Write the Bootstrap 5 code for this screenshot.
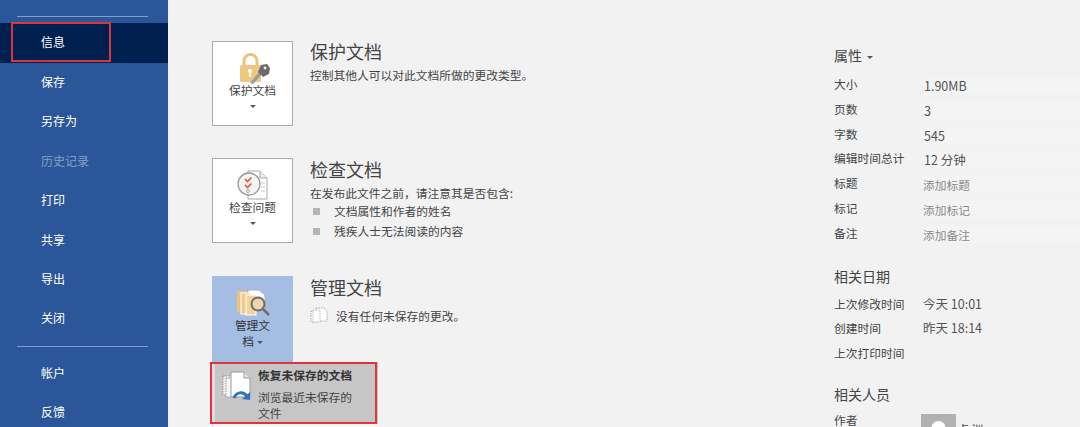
<!DOCTYPE html>
<html lang="zh">
<head>
  <meta charset="utf-8" />
  <title>信息</title>
  <link href="https://cdn.jsdelivr.net/npm/bootstrap@5.3.2/dist/css/bootstrap.min.css" rel="stylesheet">
  <style>
    html, body { height: 427px; overflow: hidden; }
    body {
      background: #f2f2f2;
      color: #444;
      font-family: "Noto Sans CJK SC", "Liberation Sans", sans-serif;
      font-size: 11.75px;
      line-height: 16px;
    }
    .frame { position: relative; width: 1080px; height: 427px; overflow: hidden; }
    /* left menu */
    .side { width: 168px; background: #2b579a; padding-top: 16px; }
    .side-line { height: 1px; margin: 0 20px 0 17px; background: #7f9fcb; }
    .side-item { display: block; height: 39.4px; line-height: 38px; padding-left: 41px; color: #fff; text-decoration: none; font-size: 12px; }
    .side-item.on { background: #002050; height: 40px; }
    .side-item.off { color: #8a9fc0; }
    .side-top { height: 6px; }
    .side-gap { height: 7px; }
    /* middle */
    .mid { width: 666px; padding: 41px 0 0 44px; }
    .sect { height: 117px; }
    .sect-wide { height: 118px; }
    .tile { width: 81px; height: 85px; flex: none; background: #fff; border: 1px solid #ababab; color: #444; text-align: center; padding-top: 10px; }
    .tile svg { display: block; margin: 0 auto; }
    .tile-label { margin-top: -2px; line-height: 16px; }
    .tile-caret { line-height: 14px; }
    .caret-s { display: inline-block; width: 0; height: 0; border-left: 3px solid transparent; border-right: 3px solid transparent; border-top: 3px solid #555; vertical-align: middle; }
    .tile.picked { background: #a4bee3; border-color: #a4bee3; height: 86px; color: #333; padding-top: 12px; }
    .tile.picked .tile-label { margin-top: 1px; line-height: 15.5px; }
    .sect-body { padding-left: 17px; margin-top: -2px; }
    .sect-body.low { margin-top: -1px; }
    .sect-title { font-size: 18px; line-height: 24px; font-weight: 400; color: #444; margin: 0 0 4px; }
    .sect-bullets { margin: 0; padding: 0; list-style: none; }
    .sect-bullets li { display: flex; align-items: center; height: 20px; }
    .sect-bullets i { width: 7px; height: 7px; background: #b5b5b5; margin: 0 14px 0 3px; }
    .sect-note { margin-top: 8px; }
    .drop { position: absolute; left: 212px; top: 362px; width: 166px; height: 65px; background: #c6c6c6; border-left: 3px solid #dcdcdc; border-bottom: 3px solid #f7f7f7; padding: 5px 0 0 7px; color: #444; }
    .drop-icon { margin-top: 4px; }
    .drop-text { margin-left: 6px; }
    .drop-head { font-weight: 700; color: #333; line-height: 16px; }
    .drop-sub { width: 100px; line-height: 15.5px; margin-top: 6px; }
    /* right */
    .info { flex: 1; padding-top: 45px; }
    .info-title { font-size: 14px; line-height: 20px; font-weight: 400; color: #444; margin: 0 0 9px; }
    .info-title .caret-s { margin-left: 2px; }
    .info-row { display: flex; height: 24.8px; line-height: 20px; }
    .info-key { width: 90px; flex: none; }
    .info-val { flex: 1; background: #f4f4f4; height: 17px; line-height: 18px; margin-top: 3px; color: #555; font-size: 12.5px; }
    .info-val.hint { color: #8a8a8a; font-size: 11.75px; margin-left: -1px; }
    .info-val.bare { background: none; margin-left: -1px; color: #555; margin-top: 0; line-height: 20px; }
    .head-date { margin-top: 18px; margin-bottom: 8px; }
    .head-people { margin-top: 16px; margin-bottom: 6px; }
    .avatar { width: 35px; height: 35px; background: #b1b1b1; overflow: hidden; margin-left: -3px; flex: none; margin-top: 4px; }
    .person { margin: 9px 0 0 1px; }
    /* red marks */
    .mark-red { position: absolute; border: 2px solid #e0343c; pointer-events: none; }
    .mark-a { left: 11px; top: 22px; width: 100px; height: 40px; }
    .mark-b { left: 210px; top: 362px; width: 167px; height: 62px; }
  </style>
</head>
<body>
  <div class="frame d-flex">
    <nav class="side flex-shrink-0">
      <div class="side-line"></div>
      <div class="side-top"></div>
      <a class="side-item on" href="#">信息</a>
      <a class="side-item" href="#">保存</a>
      <a class="side-item" href="#">另存为</a>
      <a class="side-item off" href="#">历史记录</a>
      <a class="side-item" href="#">打印</a>
      <a class="side-item" href="#">共享</a>
      <a class="side-item" href="#">导出</a>
      <a class="side-item" href="#">关闭</a>
      <div class="side-gap"></div>
      <div class="side-line"></div>
      <div class="side-gap"></div>
      <a class="side-item" href="#">帐户</a>
      <a class="side-item" href="#">反馈</a>
    </nav>

    <main class="mid">
      <section class="sect d-flex">
        <div class="tile">
          <svg width="38" height="32" viewBox="0 0 38 32">
            <path d="M10 13V9a6.500 6.500 0 0 1 13 0v4" fill="none" stroke="#e9c47e" stroke-width="3"/>
            <rect x="6" y="13" width="21" height="17" rx="1.500" fill="#eec87f"/>
            <circle cx="16" cy="19" r="2" fill="#fff"/>
            <rect x="15" y="19" width="2" height="6" fill="#fff"/>
            <path d="M16 31l9-11 3 2-9 10z" fill="#9a9a9a"/>
            <path d="M24 20l3-7 6-1 3 4-1 6-6 3z" fill="#6b6b6b"/>
            <circle cx="31" cy="16" r="1.400" fill="#f1f1f1"/>
          </svg>
          <div class="tile-label">保护文档</div>
          <div class="tile-caret"><span class="caret-s"></span></div>
        </div>
        <div class="sect-body">
          <h2 class="sect-title">保护文档</h2>
          <div>控制其他人可以对此文档所做的更改类型。</div>
        </div>
      </section>

      <section class="sect sect-wide d-flex">
        <div class="tile">
          <svg width="38" height="32" viewBox="0 0 38 32">
            <path d="M14 2h12l7 7v21H14z" fill="#fff" stroke="#a8a8a8"/>
            <path d="M26 2v7h7" fill="#eee" stroke="#a8a8a8"/>
            <path d="M27 14h4M27 18h4M27 22h4" stroke="#c4c4c4"/>
            <circle cx="15" cy="15" r="11" fill="#f4f4f4" stroke="#9a9a9a" stroke-width="1.300"/>
            <path d="M11 10l2.500 2.500 4-4M11 16l2.500 2.500 4-4" fill="none" stroke="#e2572b" stroke-width="1.600"/>
            <circle cx="14" cy="22" r="1.500" fill="none" stroke="#aaa"/>
          </svg>
          <div class="tile-label">检查问题</div>
          <div class="tile-caret"><span class="caret-s"></span></div>
        </div>
        <div class="sect-body low">
          <h2 class="sect-title">检查文档</h2>
          <div>在发布此文件之前，请注意其是否包含:</div>
          <ul class="sect-bullets">
            <li><i></i>文档属性和作者的姓名</li>
            <li><i></i>残疾人士无法阅读的内容</li>
          </ul>
        </div>
      </section>

      <section class="sect d-flex">
        <div class="tile picked">
          <svg width="34" height="27" viewBox="0 0 34 27">
            <path d="M12 1h11l6 5v15H12z" fill="#fff" stroke="#b0b0b0"/>
            <rect x="1" y="2" width="10" height="21" fill="#eec27c"/>
            <rect x="5" y="4" width="10" height="21" fill="#f1c988" stroke="#fff"/>
            <rect x="10" y="6" width="10" height="20" fill="#f4d49c" stroke="#fff"/>
            <circle cx="22" cy="15" r="6.500" fill="#ecd6ad" stroke="#6d6d6d" stroke-width="2"/>
            <path d="M27 20l6 6" stroke="#6d6d6d" stroke-width="2.500"/>
          </svg>
          <div class="tile-label">管理文<br>档 <span class="caret-s"></span></div>
        </div>
        <div class="sect-body low">
          <h2 class="sect-title">管理文档</h2>
          <div class="d-flex align-items-center gap-2 sect-note">
            <svg width="18" height="17" viewBox="0 0 18 17">
              <path d="M6 1h8l3 3v10H6z" fill="#fff" stroke="#a8a8a8" stroke-dasharray="1.500 1"/>
              <path d="M1 4h7v11H1z" fill="#fff" stroke="#a8a8a8" stroke-dasharray="1.500 1"/>
              <path d="M3 3h7v12H3z" fill="#fff" stroke="#bbb" stroke-dasharray="1.500 1"/>
            </svg>
            <span>没有任何未保存的更改。</span>
          </div>
        </div>
      </section>
    </main>

    <aside class="info">
      <h3 class="info-title">属性 <span class="caret-s"></span></h3>
      <div class="info-row"><div class="info-key">大小</div><div class="info-val">1.90MB</div></div>
      <div class="info-row"><div class="info-key">页数</div><div class="info-val">3</div></div>
      <div class="info-row"><div class="info-key">字数</div><div class="info-val">545</div></div>
      <div class="info-row"><div class="info-key">编辑时间总计</div><div class="info-val">12 分钟</div></div>
      <div class="info-row"><div class="info-key">标题</div><div class="info-val hint">添加标题</div></div>
      <div class="info-row"><div class="info-key">标记</div><div class="info-val hint">添加标记</div></div>
      <div class="info-row"><div class="info-key">备注</div><div class="info-val hint">添加备注</div></div>

      <h3 class="info-title head-date">相关日期</h3>
      <div class="info-row"><div class="info-key">上次修改时间</div><div class="info-val bare">今天 10:01</div></div>
      <div class="info-row"><div class="info-key">创建时间</div><div class="info-val bare">昨天 18:14</div></div>
      <div class="info-row"><div class="info-key">上次打印时间</div></div>

      <h3 class="info-title head-people">相关人员</h3>
      <div class="info-row">
        <div class="info-key">作者</div>
        <div class="avatar">
          <svg width="35" height="35" viewBox="0 0 35 35"><circle cx="17.500" cy="14" r="7" fill="#fff"/><path d="M4 35c2-10 8-13 13.500-13S29 25 31 35z" fill="#fff"/></svg>
        </div>
        <div class="person">卢 洲</div>
      </div>
    </aside>

    <div class="drop d-flex">
      <svg class="drop-icon flex-shrink-0" width="30" height="30" viewBox="0 0 30 30">
        <path d="M1 5h13v19H1z" fill="#eee" stroke="#999" stroke-dasharray="1.500 1"/>
        <path d="M4 7h13v19H4z" fill="#f6f6f6" stroke="#999" stroke-dasharray="1.500 1"/>
        <path d="M9 1h13l6 6v19H9z" fill="#fff" stroke="#999"/>
        <path d="M22 1v6h6" fill="#e6e6e6" stroke="#999"/>
        <path d="M12 27c2-6 9-7 13-2" fill="none" stroke="#2e75b6" stroke-width="3"/>
        <path d="M20 28l8 1 0-8z" fill="#2e75b6"/>
      </svg>
      <div class="drop-text">
        <div class="drop-head">恢复未保存的文档</div>
        <div class="drop-sub">浏览最近未保存的文件</div>
      </div>
    </div>

    <div class="mark-red mark-a"></div>
    <div class="mark-red mark-b"></div>
  </div>

  <script src="https://cdn.jsdelivr.net/npm/bootstrap@5.3.2/dist/js/bootstrap.bundle.min.js"></script>
</body>
</html>
